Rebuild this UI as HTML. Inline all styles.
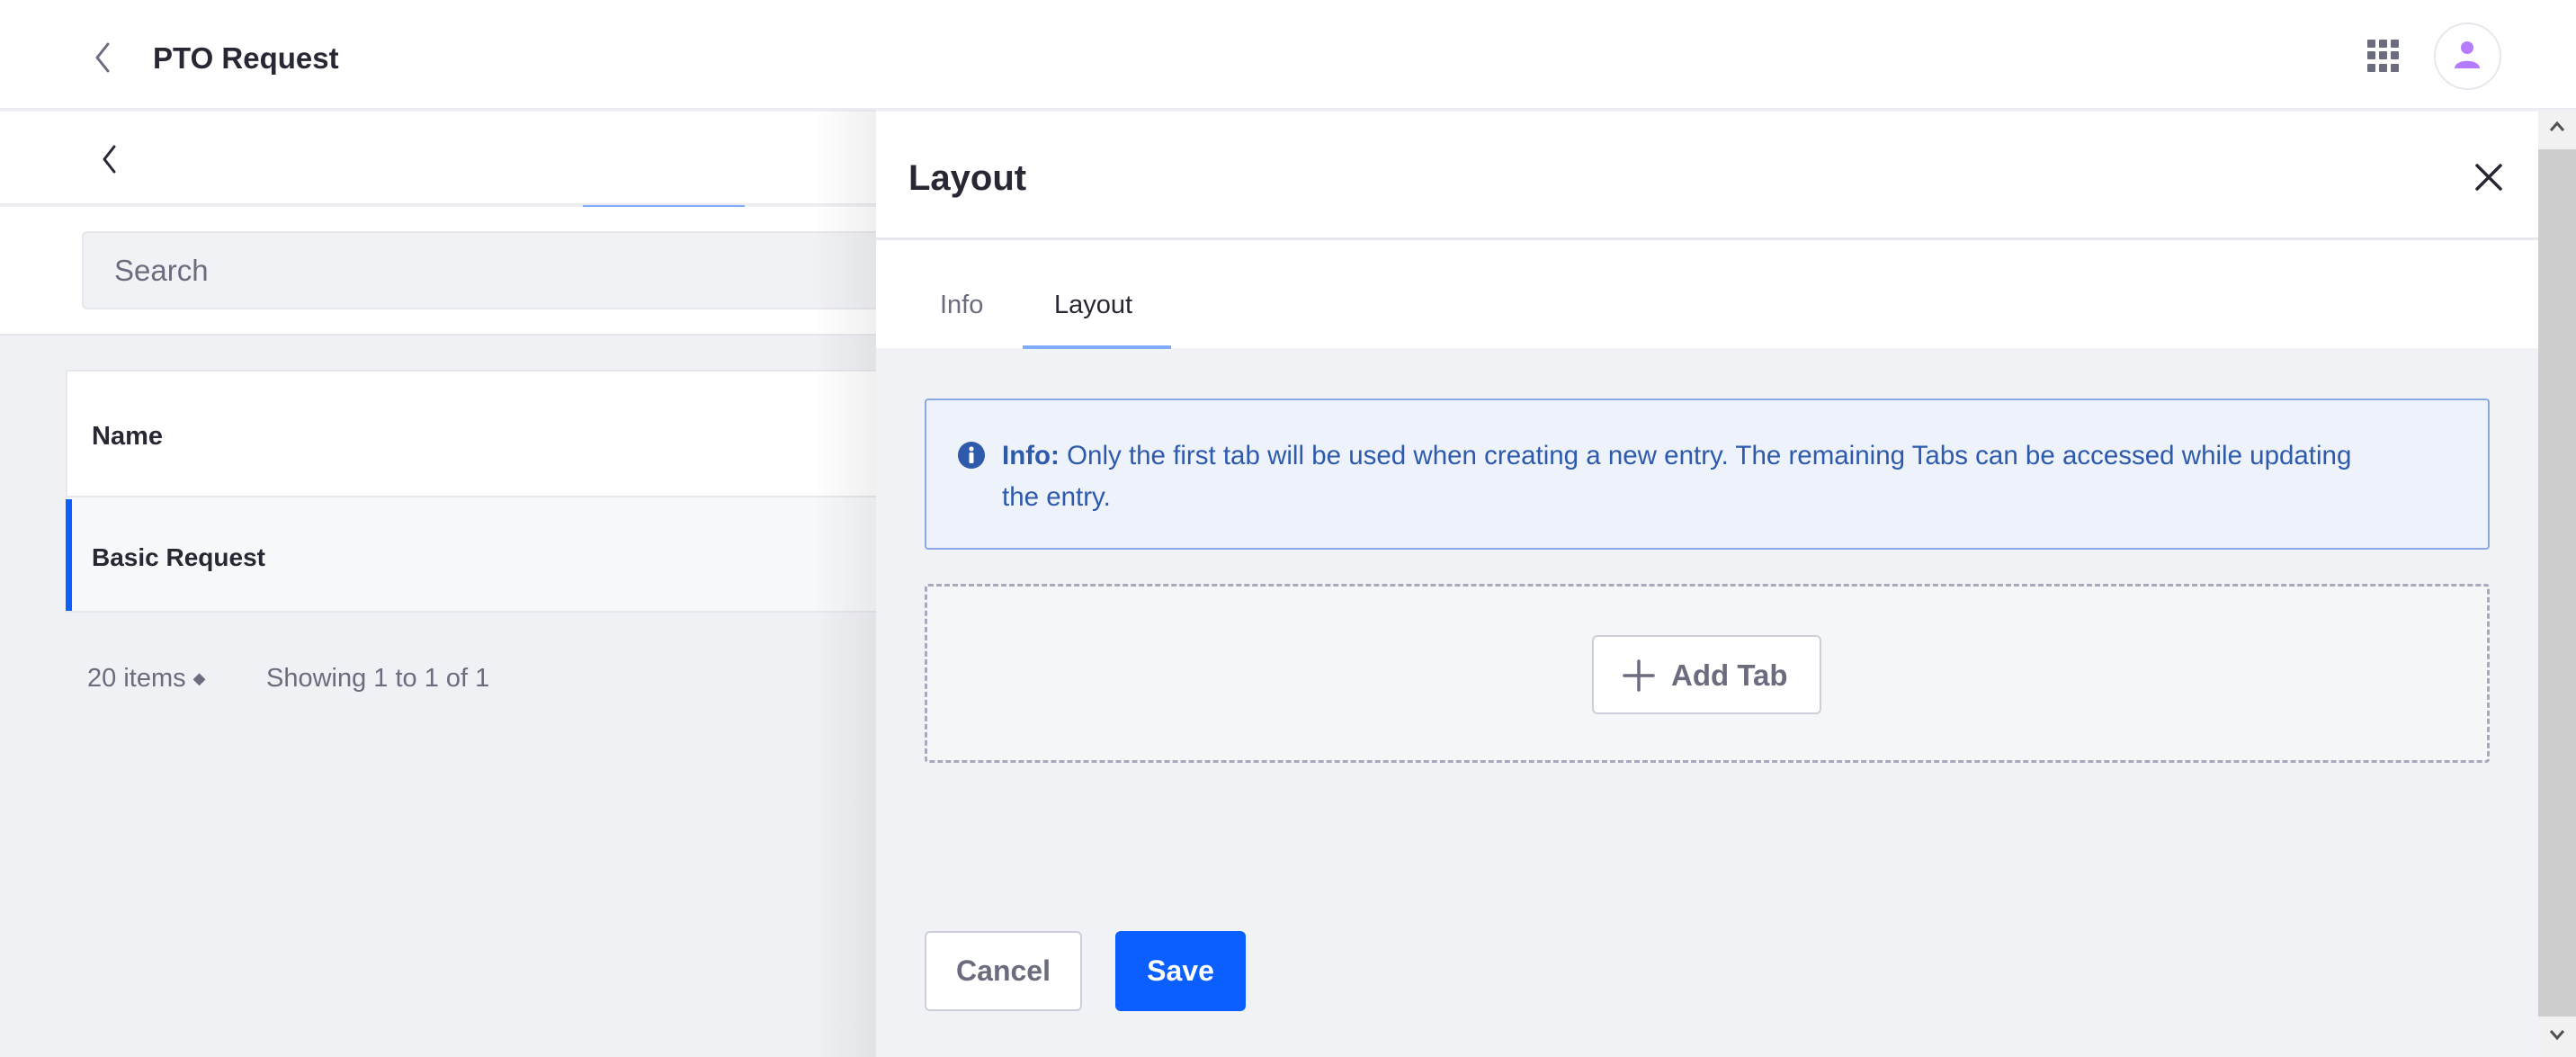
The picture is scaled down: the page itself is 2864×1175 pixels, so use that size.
<!DOCTYPE html>
<html><head><meta charset="utf-8">
<style>
*{box-sizing:border-box;margin:0;padding:0}
body{width:2864px;height:1175px;overflow:hidden;background:#f0f1f5;font-family:"Liberation Sans",sans-serif;position:relative;color:#272833}
.abs{position:absolute}
</style></head><body>
<div class="abs" style="left:0;top:0;width:2864px;height:122px;background:#fff;border-bottom:2px solid #ececf0"></div>
<svg class="abs" style="left:100px;top:46px" width="30" height="36" viewBox="0 0 30 36"><path d="M20 3 L8 18 L20 33" fill="none" stroke="#6b6c7e" stroke-width="3" stroke-linecap="round" stroke-linejoin="round"/></svg>
<div class="abs" style="left:170px;top:43px;font-size:33px;font-weight:600;line-height:44px;color:#272833">PTO Request</div>
<div class="abs" style="left:2632px;top:44px;width:36px;height:36px;display:grid;grid-template-columns:repeat(3,9px);grid-gap:4px">
<i style="background:#6b6c7e;border-radius:1px;height:9px"></i><i style="background:#6b6c7e;border-radius:1px;height:9px"></i><i style="background:#6b6c7e;border-radius:1px;height:9px"></i><i style="background:#6b6c7e;border-radius:1px;height:9px"></i><i style="background:#6b6c7e;border-radius:1px;height:9px"></i><i style="background:#6b6c7e;border-radius:1px;height:9px"></i><i style="background:#6b6c7e;border-radius:1px;height:9px"></i><i style="background:#6b6c7e;border-radius:1px;height:9px"></i><i style="background:#6b6c7e;border-radius:1px;height:9px"></i></div>
<div class="abs" style="left:2706px;top:25px;width:75px;height:75px;border-radius:50%;border:2px solid #e7e7ed;background:#fff"></div>
<svg class="abs" style="left:2728px;top:45px" width="30" height="34" viewBox="0 0 30 34"><circle cx="15" cy="8" r="7" fill="#b57cff"/><path d="M1 31 C1 20 29 20 29 31 Z" fill="#b57cff"/></svg>

<div class="abs" style="left:0;top:124px;width:974px;height:104px;background:#fff;border-bottom:2px solid #ececf0"></div>
<svg class="abs" style="left:110px;top:160px" width="26" height="34" viewBox="0 0 26 34"><path d="M17 3 L6 17 L17 31" fill="none" stroke="#272833" stroke-width="3" stroke-linecap="round" stroke-linejoin="round"/></svg>
<div class="abs" style="left:648px;top:228px;width:180px;height:2px;background:#80acff"></div>
<div class="abs" style="left:0;top:230px;width:974px;height:143px;background:#fff;border-bottom:2px solid #e7e7ed"></div>
<div class="abs" style="left:91px;top:257px;width:900px;height:87px;background:#f1f2f5;border:2px solid #e7e7ed;border-radius:6px"></div>
<div class="abs" style="left:127px;top:282px;font-size:33px;color:#6b6c7e;line-height:38px">Search</div>

<div class="abs" style="left:73px;top:411px;width:920px;height:142px;background:#fff;border:2px solid #e7e7ed"></div>
<div class="abs" style="left:102px;top:468px;font-size:29px;font-weight:600;line-height:34px">Name</div>
<div class="abs" style="left:73px;top:553px;width:920px;height:128px;background:#f7f8f9;border-bottom:2px solid #e7e7ed"></div>
<div class="abs" style="left:73px;top:555px;width:7px;height:124px;background:#0b5fff"></div>
<div class="abs" style="left:102px;top:603px;font-size:28px;font-weight:600;line-height:34px">Basic Request</div>
<div class="abs" style="left:97px;top:737px;font-size:29px;color:#6b6c7e;line-height:34px">20 items <span style="font-size:18px;vertical-align:3px">&#9670;</span></div>
<div class="abs" style="left:296px;top:737px;font-size:29px;color:#6b6c7e;line-height:34px">Showing 1 to 1 of 1</div>

<div class="abs" style="left:904px;top:122px;width:70px;height:1053px;background:linear-gradient(to right,rgba(0,0,0,0),rgba(0,0,0,0.06))"></div>

<div class="abs" style="left:974px;top:124px;width:1848px;height:1051px;background:#f0f2f6"></div>
<div class="abs" style="left:974px;top:124px;width:1848px;height:143px;background:#fff;border-bottom:3px solid #e7e7ed"></div>
<div class="abs" style="left:1010px;top:174px;font-size:40px;font-weight:700;line-height:48px">Layout</div>
<svg class="abs" style="left:2751px;top:181px" width="32" height="32" viewBox="0 0 32 32"><path d="M3 3 L29 29 M29 3 L3 29" stroke="#272833" stroke-width="3.5" stroke-linecap="round"/></svg>
<div class="abs" style="left:974px;top:267px;width:1848px;height:120px;background:#fff"></div>
<div class="abs" style="left:1045px;top:322px;font-size:29px;color:#6b6c7e;line-height:34px">Info</div>
<div class="abs" style="left:1172px;top:322px;font-size:29px;color:#272833;line-height:34px">Layout</div>
<div class="abs" style="left:1137px;top:384px;width:165px;height:4px;background:#80acff"></div>

<div class="abs" style="left:1028px;top:443px;width:1740px;height:168px;background:#edf2fb;border:2px solid #89a7e0;border-radius:4px"></div>
<svg class="abs" style="left:1064px;top:490px" width="32" height="32" viewBox="0 0 32 32"><circle cx="16" cy="16" r="15" fill="#2e5aac"/><circle cx="16" cy="9" r="2.6" fill="#fff"/><rect x="13.5" y="13" width="5" height="12" rx="1.5" fill="#fff"/></svg>
<div class="abs" style="left:1114px;top:484px;font-size:29.5px;color:#2e5aac;line-height:46px;white-space:nowrap"><b>Info:</b> Only the first tab will be used when creating a new entry. The remaining Tabs can be accessed while updating<br>the entry.</div>

<div class="abs" style="left:1028px;top:649px;width:1740px;height:199px;background:#f5f6f8;border:3px dashed #a7a9bc;border-radius:4px"></div>
<div class="abs" style="left:1770px;top:706px;width:255px;height:88px;background:#fff;border:2px solid #cdced9;border-radius:6px"></div>
<svg class="abs" style="left:1804px;top:733px" width="36" height="36" viewBox="0 0 36 36"><path d="M18 2 V34 M2 18 H34" stroke="#6b6c7e" stroke-width="3.5" stroke-linecap="round"/></svg>
<div class="abs" style="left:1858px;top:732px;font-size:33px;font-weight:600;color:#6b6c7e;line-height:38px">Add Tab</div>

<div class="abs" style="left:1028px;top:1035px;width:175px;height:89px;background:#fff;border:2px solid #cdced9;border-radius:6px;font-size:32px;font-weight:600;color:#6b6c7e;text-align:center;line-height:85px">Cancel</div>
<div class="abs" style="left:1240px;top:1035px;width:145px;height:89px;background:#0b5fff;border-radius:6px;font-size:32px;font-weight:600;color:#fff;text-align:center;line-height:89px">Save</div>

<div class="abs" style="left:2822px;top:124px;width:42px;height:1051px;background:#cdcdcd"></div>
<div class="abs" style="left:2822px;top:124px;width:42px;height:42px;background:#f1f1f1"></div>
<div class="abs" style="left:2822px;top:1130px;width:42px;height:45px;background:#f1f1f1"></div>
<svg class="abs" style="left:2833px;top:131px" width="20" height="20" viewBox="0 0 20 20"><path d="M3 14 L10 6 L17 14" fill="none" stroke="#505050" stroke-width="3"/></svg>
<svg class="abs" style="left:2833px;top:1140px" width="20" height="20" viewBox="0 0 20 20"><path d="M3 6 L10 14 L17 6" fill="none" stroke="#505050" stroke-width="3"/></svg>
</body></html>
